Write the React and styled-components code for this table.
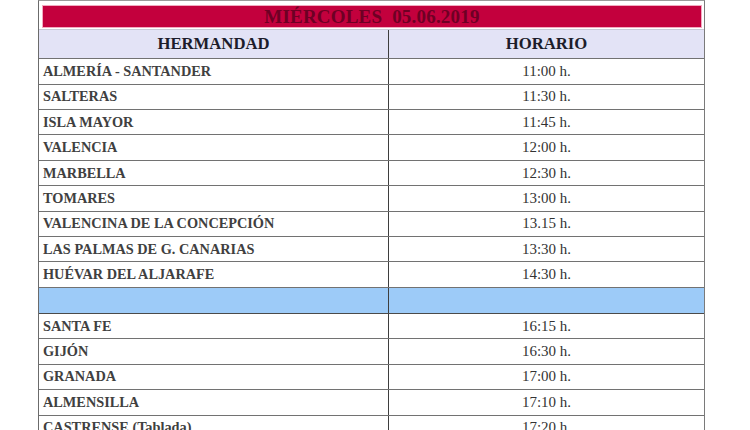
import React from "react";
import styled, { createGlobalStyle } from "styled-components";

const GlobalStyle = createGlobalStyle`
  html, body { margin: 0; padding: 0; background: #ffffff; }
  body { font-family: "Liberation Serif", "Times New Roman", serif; overflow: hidden; }
`;

const Page = styled.div`
  padding-left: 38px;
  width: 750px;
  height: 430px;
  box-sizing: border-box;
  overflow: hidden;
`;

const Table = styled.div`
  width: 667px;
  box-sizing: border-box;
  border-left: 1.5px solid #6b6b6b;
  border-right: 1.5px solid #7a7a7a;
  border-top: 1.5px solid #9a9a9a;
`;

const TitleCell = styled.div`
  padding: 3.5px 2px 1.5px 3px;
  box-sizing: border-box;
  border-bottom: 1px solid #c9c9d6;
`;

const TitleBar = styled.div`
  height: 23px;
  box-sizing: border-box;
  background: #c3003d;
  border: 1px solid #f2aac0;
  display: flex;
  align-items: center;
  justify-content: center;
  color: #6e0024;
  font-weight: bold;
  font-size: 19px;
  letter-spacing: 0.2px;
  white-space: pre;
  padding-top: 1px;
`;

const Row = styled.div`
  display: grid;
  grid-template-columns: 350px 1fr;
  height: ${(p) => p.$h}px;
  box-sizing: border-box;
  border-bottom: 1.5px solid ${(p) => (p.$dark ? "#4a4a4a" : "#727272")};
  background: ${(p) => p.$bg || "#ffffff"};
`;

const Cell = styled.div`
  display: flex;
  align-items: center;
  justify-content: ${(p) => (p.$center ? "center" : "flex-start")};
  padding-left: ${(p) => (p.$center ? 0 : 4)}px;
  border-right: ${(p) => (p.$divider ? "1.5px solid #3e3e3e" : "none")};
  box-sizing: border-box;
  white-space: nowrap;
  overflow: hidden;
`;

const HeadText = styled.span`
  font-weight: bold;
  font-size: 16.7px;
  color: #1d1d2b;
`;

const NameText = styled.span`
  font-weight: bold;
  font-size: 14.3px;
  color: #404040;
`;

const TimeText = styled.span`
  font-size: 15px;
  color: #333333;
`;

const rows = [
  ["ALMERÍA - SANTANDER", "11:00 h."],
  ["SALTERAS", "11:30 h."],
  ["ISLA MAYOR", "11:45 h."],
  ["VALENCIA", "12:00 h."],
  ["MARBELLA", "12:30 h."],
  ["TOMARES", "13:00 h."],
  ["VALENCINA DE LA CONCEPCIÓN", "13.15 h."],
  ["LAS PALMAS DE G. CANARIAS", "13:30 h."],
  ["HUÉVAR DEL ALJARAFE", "14:30 h."],
  null,
  ["SANTA FE", "16:15 h."],
  ["GIJÓN", "16:30 h."],
  ["GRANADA", "17:00 h."],
  ["ALMENSILLA", "17:10 h."],
  ["CASTRENSE (Tablada)", "17:20 h."],
];

export default function App() {
  return (
    <>
      <GlobalStyle />
      <Page>
        <Table>
          <TitleCell>
            <TitleBar>{"MIÉRCOLES  05.06.2019"}</TitleBar>
          </TitleCell>
          <Row $h={29.3} $bg="#e3e3f6">
            <Cell $center $divider>
              <HeadText>HERMANDAD</HeadText>
            </Cell>
            <Cell $center>
              <HeadText>HORARIO</HeadText>
            </Cell>
          </Row>
          {rows.map((r, i) =>
            r ? (
              <Row key={i} $h={25.4}>
                <Cell $divider>
                  <NameText>{r[0]}</NameText>
                </Cell>
                <Cell $center>
                  <TimeText>{r[1]}</TimeText>
                </Cell>
              </Row>
            ) : (
              <Row key={i} $h={26.2} $bg="#9dcbf8" $dark>
                <Cell $divider />
                <Cell />
              </Row>
            )
          )}
        </Table>
      </Page>
    </>
  );
}
